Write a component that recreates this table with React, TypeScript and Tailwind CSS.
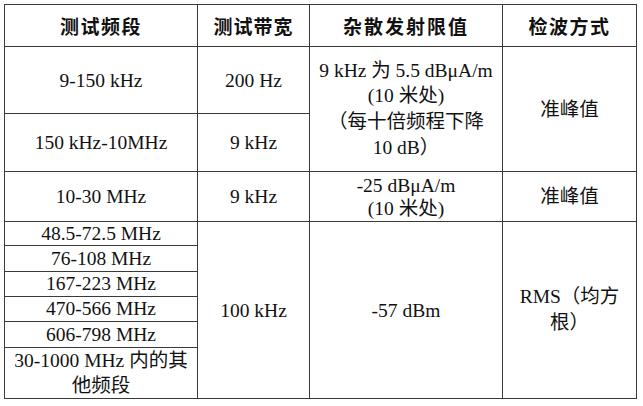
import React from "react";

const cell = "border-[1.5px] border-[#3a3a3a] p-0 text-center align-middle";

export default function App() {
  return (
    <div className="w-[643px] h-[406px] bg-white pl-[4px] pt-[4px] font-['Liberation_Serif','Noto_Sans_CJK_SC',serif] text-[19.5px] leading-[25px] text-[#111]">
      <table className="table-fixed border-collapse w-[632px]">
        <colgroup>
          <col className="w-[193px]" />
          <col className="w-[112px]" />
          <col className="w-[193px]" />
          <col className="w-[134px]" />
        </colgroup>
        <tbody>
          {/* 表头 */}
          <tr className="h-[42px]">
            <th className={`${cell} font-['Noto_Sans_CJK_SC',sans-serif] font-bold text-[19px] tracking-[1.5px]`}>测试频段</th>
            <th className={`${cell} font-['Noto_Sans_CJK_SC',sans-serif] font-bold text-[19px] tracking-[1px]`}>测试带宽</th>
            <th className={`${cell} font-['Noto_Sans_CJK_SC',sans-serif] font-bold text-[19px] tracking-[2px]`}>杂散发射限值</th>
            <th className={`${cell} font-['Noto_Sans_CJK_SC',sans-serif] font-bold text-[19px] tracking-[1.5px]`}>检波方式</th>
          </tr>
          <tr className="h-[67px]">
            <td className={cell}>9-150 kHz</td>
            <td className={cell}>200 Hz</td>
            <td className={`${cell} leading-[25.7px]`} rowSpan={2}>
              9 kHz 为 5.5 dBμA/m
              <br />
              (10 米处)
              <br />
              （每十倍频程下降
              <br />
              10 dB）
            </td>
            <td className={cell} rowSpan={2}>准峰值</td>
          </tr>
          <tr className="h-[58px]">
            <td className={cell}>150 kHz-10MHz</td>
            <td className={cell}>9 kHz</td>
          </tr>
          <tr className="h-[50px]">
            <td className={cell}>10-30 MHz</td>
            <td className={cell}>9 kHz</td>
            <td className={`${cell} leading-[23px]`}>
              -25 dBμA/m
              <br />
              (10 米处)
            </td>
            <td className={cell}>准峰值</td>
          </tr>
          <tr className="h-[24px]">
            <td className={`${cell} leading-[22px]`}>48.5-72.5 MHz</td>
            <td className={cell} rowSpan={6}>100 kHz</td>
            <td className={cell} rowSpan={6}>-57 dBm</td>
            <td className={`${cell} leading-[26px]`} rowSpan={6}>
              RMS（均方
              <br />
              根）
            </td>
          </tr>
          <tr className="h-[26px]">
            <td className={`${cell} leading-[22px]`}>76-108 MHz</td>
          </tr>
          <tr className="h-[25px]">
            <td className={`${cell} leading-[22px]`}>167-223 MHz</td>
          </tr>
          <tr className="h-[25px]">
            <td className={`${cell} leading-[22px]`}>470-566 MHz</td>
          </tr>
          <tr className="h-[26px]">
            <td className={`${cell} leading-[22px]`}>606-798 MHz</td>
          </tr>
          <tr className="h-[51px]">
            <td className={cell}>
              30-1000 MHz 内的其
              <br />
              他频段
            </td>
          </tr>
        </tbody>
      </table>
    </div>
  );
}
